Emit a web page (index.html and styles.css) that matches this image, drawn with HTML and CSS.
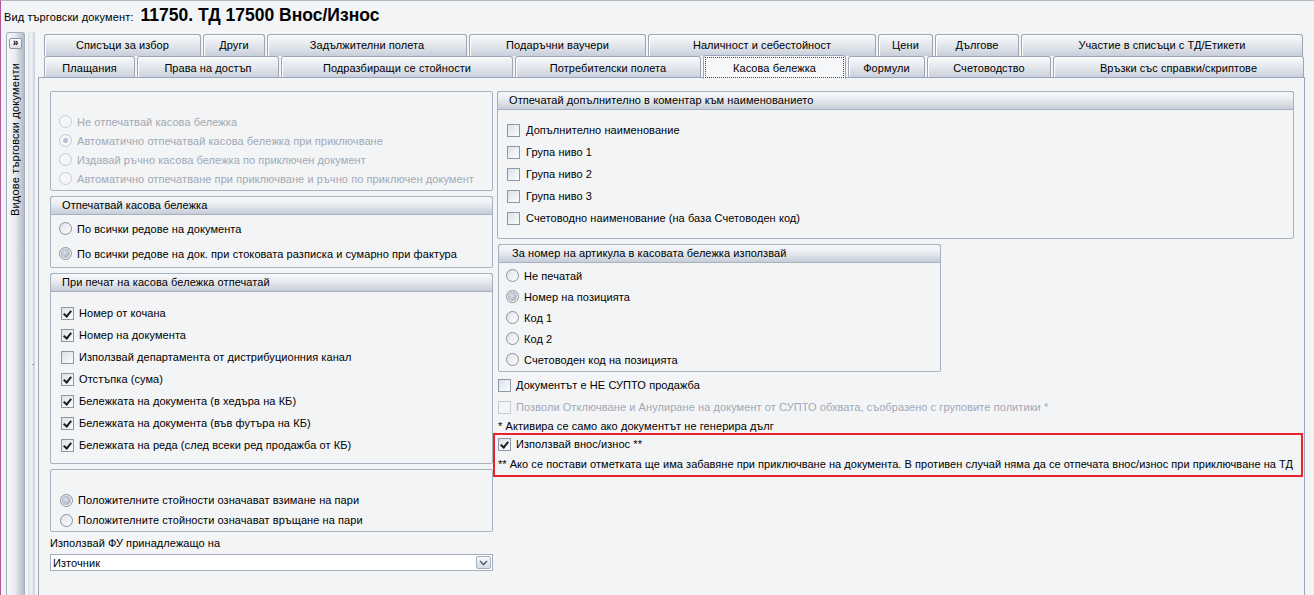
FILE: index.html
```html
<!DOCTYPE html>
<html lang="bg">
<head>
<meta charset="utf-8">
<title>Вид търговски документ</title>
<link rel="stylesheet" href="styles.css">
</head>
<body>
<div class="window">
  <div class="titlebar">
    <span class="lbl">Вид търговски документ:</span>
    <span class="doc">11750. ТД 17500 Внос/Износ</span>
  </div>
  <div class="main">
    <div class="side">
      <div class="expand">»</div>
      <div class="vtext">Видове търговски документи</div>
    </div>
    <div class="splitter"><span class="grip"></span></div>
    <div class="tabctl">
      <div class="tabrow row1">
        <div class="tab">Списъци за избор</div>
        <div class="tab">Други</div>
        <div class="tab">Задължителни полета</div>
        <div class="tab">Подаръчни ваучери</div>
        <div class="tab">Наличност и себестойност</div>
        <div class="tab">Цени</div>
        <div class="tab">Дългове</div>
        <div class="tab">Участие в списъци с ТД/Етикети</div>
      </div>
      <div class="tabrow row2">
        <div class="tab">Плащания</div>
        <div class="tab">Права на достъп</div>
        <div class="tab">Подразбиращи се стойности</div>
        <div class="tab">Потребителски полета</div>
        <div class="tab active"><span class="focus">Касова бележка</span></div>
        <div class="tab">Формули</div>
        <div class="tab">Счетоводство</div>
        <div class="tab">Връзки със справки/скриптове</div>
      </div>
      <div class="panel">
        <div class="col left">
          <div class="grp g1">
            <div class="body">
              <div class="opt r19 dis"><span class="rb"></span>Не отпечатвай касова бележка</div>
              <div class="opt r19 dis"><span class="rb on"></span>Автоматично отпечатвай касова бележка при приключване</div>
              <div class="opt r19 dis"><span class="rb"></span>Издавай ръчно касова бележка по приключен документ</div>
              <div class="opt r19 dis"><span class="rb"></span>Автоматично отпечатване при приключване и ръчно по приключен документ</div>
            </div>
          </div>
          <div class="grp g2">
            <div class="hdr">Отпечатвай касова бележка</div>
            <div class="body">
              <div class="opt r25"><span class="rb"></span>По всички редове на документа</div>
              <div class="opt r25"><span class="rb on"></span>По всички редове на док. при стоковата разписка и сумарно при фактура</div>
            </div>
          </div>
          <div class="grp g3">
            <div class="hdr">При печат на касова бележка отпечатай</div>
            <div class="body">
              <div class="opt r22"><span class="cb on"></span>Номер от кочана</div>
              <div class="opt r22"><span class="cb on"></span>Номер на документа</div>
              <div class="opt r22"><span class="cb"></span>Използвай департамента от дистрибуционния канал</div>
              <div class="opt r22"><span class="cb on"></span>Отстъпка (сума)</div>
              <div class="opt r22"><span class="cb on"></span>Бележката на документа (в хедъра на КБ)</div>
              <div class="opt r22"><span class="cb on"></span>Бележката на документа (във футъра на КБ)</div>
              <div class="opt r22"><span class="cb on"></span>Бележката на реда (след всеки ред продажба от КБ)</div>
            </div>
          </div>
          <div class="grp g4">
            <div class="body">
              <div class="opt r20"><span class="rb on"></span>Положителните стойности означават взимане на пари</div>
              <div class="opt r20"><span class="rb"></span>Положителните стойности означават връщане на пари</div>
            </div>
          </div>
          <div class="fieldlbl">Използвай ФУ принадлежащо на</div>
          <div class="combo">
            <span class="val">Източник</span>
            <span class="dd"><svg width="9" height="6" viewBox="0 0 9 6"><path d="M1 1 L4.5 4.5 L8 1" fill="none" stroke="#4a5566" stroke-width="1.4"/></svg></span>
          </div>
        </div>
        <div class="col right">
          <div class="grp r1">
            <div class="hdr">Отпечатай допълнително в коментар към наименованието</div>
            <div class="body">
              <div class="opt r22"><span class="cb"></span>Допълнително наименование</div>
              <div class="opt r22"><span class="cb"></span>Група ниво 1</div>
              <div class="opt r22"><span class="cb"></span>Група ниво 2</div>
              <div class="opt r22"><span class="cb"></span>Група ниво 3</div>
              <div class="opt r22"><span class="cb"></span>Счетоводно наименование (на база Счетоводен код)</div>
            </div>
          </div>
          <div class="grp r2">
            <div class="hdr">За номер на артикула в касовата бележка използвай</div>
            <div class="body">
              <div class="opt r21"><span class="rb"></span>Не печатай</div>
              <div class="opt r21"><span class="rb on"></span>Номер на позицията</div>
              <div class="opt r21"><span class="rb"></span>Код 1</div>
              <div class="opt r21"><span class="rb"></span>Код 2</div>
              <div class="opt r21"><span class="rb"></span>Счетоводен код на позицията</div>
            </div>
          </div>
          <div class="loose">
            <div class="opt r22"><span class="cb"></span>Документът е НЕ СУПТО продажба</div>
            <div class="opt r22 dis"><span class="cb"></span>Позволи Отключване и Анулиране на документ от СУПТО обхвата, съобразено с груповите политики *</div>
            <div class="note">* Активира се само ако документът не генерира дълг</div>
          </div>
          <div class="highlight">
            <div class="opt r18"><span class="cb on"></span>Използвай внос/износ **</div>
            <div class="note2">** Ако се постави отметката ще има забавяне при приключване на документа. В противен случай няма да се отпечата внос/износ при приключване на ТД</div>
          </div>
        </div>
      </div>
    </div>
  </div>
</div>
</body>
</html>
```
FILE: styles.css
```css
* { box-sizing: border-box; }
html, body { margin: 0; padding: 0; }
body {
  width: 1314px;
  height: 595px;
  overflow: hidden;
  background: #f3f4f6;
  font-family: "Liberation Sans", Arial, sans-serif;
  font-size: 11px;
  letter-spacing: 0.07px;
  color: #000;
}
.window {
  height: 595px;
  border-left: 1px solid #b2559a;
  border-top: 1px solid #b4b9c2;
  display: flex;
  flex-direction: column;
}
.titlebar {
  height: 31px;
  flex: none;
  display: flex;
  align-items: baseline;
  padding: 4px 0 0 3px;
  white-space: nowrap;
}
.titlebar .lbl { font-size: 11px; letter-spacing: 0.12px; }
.titlebar .doc {
  margin-left: 7px;
  font-size: 17.5px;
  font-weight: bold;
  line-height: 20px;
  letter-spacing: 0;
}
.main {
  flex: 1;
  display: flex;
  min-height: 0;
}
.side {
  width: 19px;
  margin-left: 5px;
  flex: none;
  border: 1px solid #a6afbd;
  border-bottom: none;
  border-radius: 3px 3px 0 0;
  background: linear-gradient(to right, #f7f8fa, #e9ecf0 45%, #b3bcc9);
  display: flex;
  flex-direction: column;
  align-items: center;
}
.expand {
  width: 13px;
  height: 11px;
  margin-top: 5px;
  border: 1px solid #8c97a8;
  border-radius: 2px;
  background: linear-gradient(#ffffff, #dbe0e7);
  font-size: 10px;
  font-weight: bold;
  line-height: 8px;
  text-align: center;
}
.vtext {
  writing-mode: vertical-rl;
  transform: rotate(180deg);
  margin-top: 14px;
  white-space: nowrap;
  line-height: 13px;
  letter-spacing: 0.2px;
}
.splitter {
  width: 7px;
  margin-left: 3px;
  flex: none;
  background: linear-gradient(to right, #dde1e7, #eef0f3 50%, #c8ced8);
  display: flex;
  flex-direction: column;
  align-items: center;
}
.grip {
  width: 2px;
  height: 2px;
  margin-top: 330px;
  background: #ffffff;
  box-shadow: 1px 1px 0 #9aa3b1;
}
.tabctl {
  width: 1267px;
  margin-left: 3px;
  flex: none;
  padding-top: 2px;
  display: flex;
  flex-direction: column;
}
.tabrow {
  display: grid;
  column-gap: 2px;
  height: 22px;
  margin-left: 6px;
  align-items: start;
}
.row1 { grid-template-columns: 157px 62px 200px 177px 228px 55px 84px 282px; }
.row2 { grid-template-columns: 91px 142px 232px 186px 143px 77px 124px 251px; }
.tab {
  height: 22px;
  border: 1px solid #9ba7b8;
  border-bottom: none;
  border-radius: 3px 3px 0 0;
  background: linear-gradient(#f7f8fa, #e6e9ee 45%, #c8cfdb);
  text-align: center;
  line-height: 21px;
  white-space: nowrap;
  box-shadow: inset 1px 1px 0 #ffffff;
}
.row2 .tab { line-height: 22px; }
.tab.active {
  position: relative;
  z-index: 1;
  height: 24px;
  margin-top: -1px;
  background: #f6f7f9;
  padding: 1px 1px 0;
}
.focus {
  display: block;
  height: 21px;
  border: 1px dotted #444;
  line-height: 20px;
}
.panel {
  margin-top: -1px;
  flex: 1;
  border: 1px solid #9ba7b8;
  border-bottom: none;
  background: #f3f4f6;
  padding: 13px 10px 0 11px;
  display: flex;
  gap: 4px;
}
.col { display: flex; flex-direction: column; }
.col.left { width: 443px; flex: none; }
.col.right { flex: 1; }

.grp {
  border: 1px solid #a7b1c0;
  border-radius: 2px;
}
.hdr {
  height: 19px;
  margin: -1px -1px 0;
  border: 1px solid #a7b1c0;
  border-radius: 3px 3px 0 0;
  background: linear-gradient(#f8f9fb, #e8ebf0 45%, #c6cdd8);
  line-height: 17px;
  padding-left: 11px;
  white-space: nowrap;
}
.g1 .body { padding: 20px 0 2px 8px; }
.g2 { margin-top: 5px; }
.g2 .body { padding: 1px 0 1px 8px; }
.g3 { margin-top: 5px; }
.g3 .body { padding: 10px 0 7px 10px; }
.g4 { margin-top: 5px; }
.g4 .body { padding: 20px 0 1px 9px; }
.r1 .body { padding: 9px 0 9px 9px; }
.r2 { margin-top: 5px; width: 443px; margin-left: 1px; }
.r2 .hdr { padding-left: 13px; }
.r2 .body { padding: 2px 0 1px 7px; }

.opt {
  display: flex;
  align-items: center;
  white-space: nowrap;
}
.r18 { height: 18px; }
.r19 { height: 19px; }
.r20 { height: 20px; }
.r21 { height: 21px; }
.r22 { height: 22px; }
.r25 { height: 25px; }
.dis { color: #a1a9b5; }

.rb {
  width: 13px;
  height: 13px;
  flex: none;
  margin-right: 5px;
  border: 1px solid #8893a4;
  border-radius: 50%;
  background: linear-gradient(135deg, #dfe3e9, #fcfcfd);
  display: flex;
  align-items: center;
  justify-content: center;
}
.rb.on::after {
  content: "";
  width: 7px;
  height: 7px;
  border-radius: 50%;
  background: radial-gradient(circle at 40% 40%, #e3e6eb, #959eab);
  box-shadow: 0 0 0 1px #b5bcc7;
}
.dis .rb {
  border-color: #c3cad4;
  background: #f5f6f8;
}
.dis .rb.on::after {
  width: 5px;
  height: 5px;
  background: #b9c0ca;
  box-shadow: none;
}
.cb {
  width: 13px;
  height: 13px;
  flex: none;
  margin-right: 5px;
  border: 1px solid #8c97a9;
  background: linear-gradient(135deg, #dce1e8, #fbfcfd);
  position: relative;
}
.cb.on::after {
  content: "";
  position: absolute;
  left: 3px;
  top: 1px;
  width: 3px;
  height: 6px;
  border: solid #1c1c1c;
  border-width: 0 2px 2px 0;
  transform: rotate(40deg);
}
.dis .cb {
  border-color: #c6ccd5;
  background: #f4f5f7;
}
.r1 .cb { margin-right: 6px; }

.fieldlbl {
  margin-top: 4px;
  height: 14px;
  line-height: 14px;
}
.combo {
  margin-top: 4px;
  height: 17px;
  border: 1px solid #a5afbe;
  background: #ffffff;
  display: flex;
  align-items: center;
  padding-left: 2px;
}
.combo .dd {
  margin-left: auto;
  margin-right: 1px;
  width: 15px;
  height: 13px;
  border: 1px solid #a5afbe;
  border-radius: 2px;
  background: linear-gradient(#f8f9fb, #d5dbe4);
  display: flex;
  align-items: center;
  justify-content: center;
}

.loose { margin-top: 2px; margin-left: 1px; }
.note {
  margin-top: 2px;
  height: 13px;
  line-height: 13px;
}
.highlight {
  height: 44px;
  margin: 0 -9px 0 -4px;
  border: 2px solid #e8232c;
  padding-left: 3px;
}
.note2 {
  margin-top: 4px;
  height: 14px;
  line-height: 14px;
  white-space: nowrap;
  letter-spacing: 0.04px;
}
```
